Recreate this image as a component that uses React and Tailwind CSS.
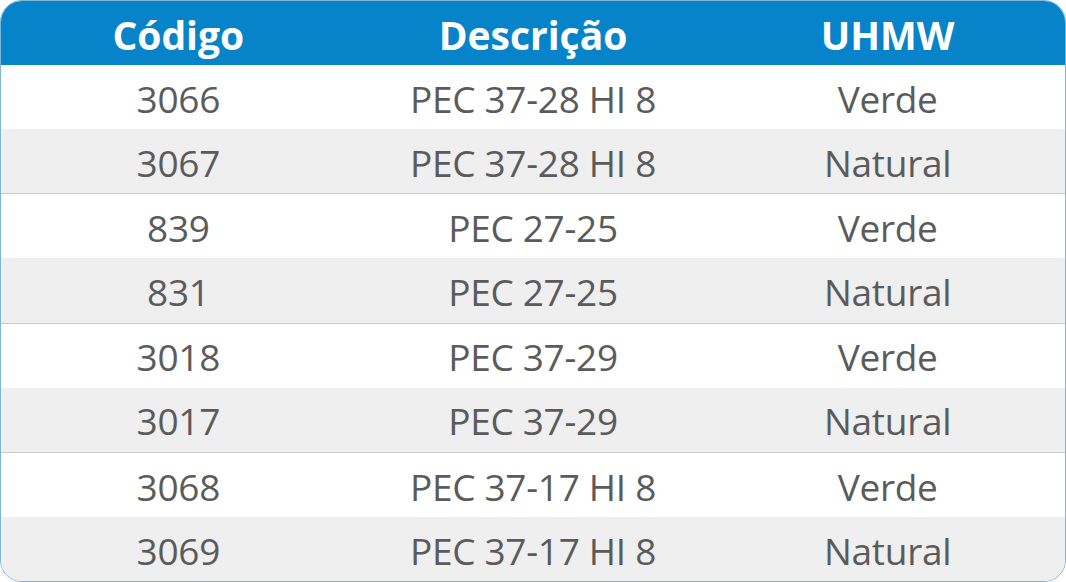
const rows = [
  ['3066', 'PEC 37-28 HI 8', 'Verde'],
  ['3067', 'PEC 37-28 HI 8', 'Natural'],
  ['839', 'PEC 27-25', 'Verde'],
  ['831', 'PEC 27-25', 'Natural'],
  ['3018', 'PEC 37-29', 'Verde'],
  ['3017', 'PEC 37-29', 'Natural'],
  ['3068', 'PEC 37-17 HI 8', 'Verde'],
  ['3069', 'PEC 37-17 HI 8', 'Natural'],
];

export default function App() {
  return (
    <div
      className="w-[1066px] h-[582px] bg-white"
      style={{ fontFamily: '"Open Sans", "Noto Sans", sans-serif' }}
    >
      <div className="h-full flex flex-col border border-[#7fb6d6] rounded-[22px] overflow-hidden">
        <div className="h-[64px] shrink-0 grid grid-cols-3 items-center pt-[5px] bg-[#0784c9] text-white font-bold text-[39px] tracking-[0px]">
          <div className="text-center">Código</div>
          <div className="text-center">Descrição</div>
          <div className="text-center">UHMW</div>
        </div>
        {rows.map((r, i) => (
          <div
            key={i}
            className={
              'flex-1 grid grid-cols-3 items-center pt-[3px] text-[37px] text-[#5b5b5b] tracking-[-0.3px] ' +
              (i % 2 === 1 ? 'bg-[#efefef]' : 'bg-white') +
              (i % 2 === 1 && i < 7 ? ' border-b border-[#c9c9c9]' : '')
            }
          >
            <div className="text-center">{r[0]}</div>
            <div className="text-center">{r[1]}</div>
            <div className="text-center">{r[2]}</div>
          </div>
        ))}
      </div>
    </div>
  );
}
